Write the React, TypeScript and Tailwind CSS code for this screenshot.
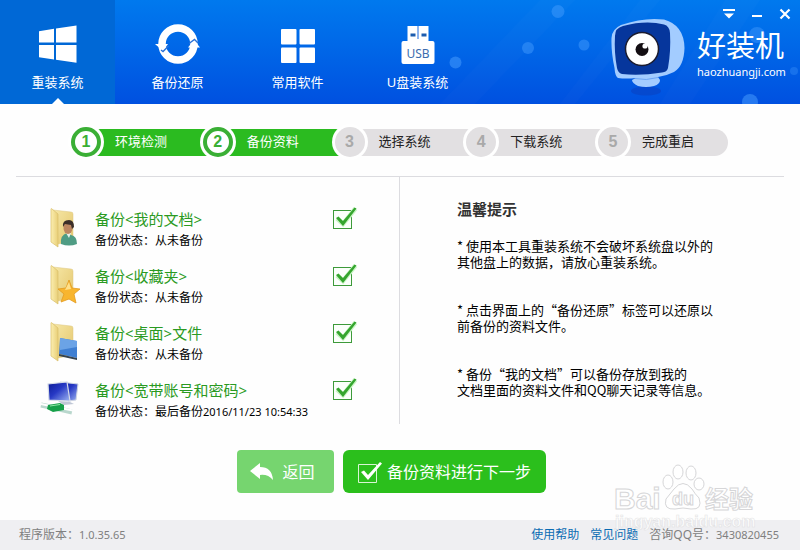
import React, { useState } from "react";

type Backup = {
    id: string;
    title: string;
    status: string;
    date?: string;
    icon: React.ReactNode;
};

const steps = ["环境检测", "备份资料", "选择系统", "下载系统", "完成重启"];
const currentStep = 2;

function WindowsIcon() {
    return (
        <svg width="40" height="40" viewBox="0 0 40 40" fill="#fff">
            <path d="M1 7.200 16 4.800V18.600H1zM18 4.500 38.500 1.500V18.600H18zM1 21H16V35.500L1 33.200zM18 21H38.500V38.800L18 35.800z" />
        </svg>
    );
}

function RestoreIcon() {
    return (
        <svg width="46" height="40" viewBox="0 0 46 40" fill="none">
            <circle cx="23" cy="20" r="16" stroke="#fff" strokeWidth="7.500" />
            <path d="M0 20H13L8 27z" fill="#fff" />
            <path d="M33 23.500H45L39 16z" fill="#fff" />
            <path d="M6 26 8 27.500 13.500 22M34 19.500 39.500 15.500 43 19" stroke="#2a72d8" strokeWidth="1.400" />
        </svg>
    );
}

function AppsIcon() {
    return (
        <svg width="34" height="40" viewBox="0 0 34 40" fill="#fff">
            <rect x="0" y="5" width="15.500" height="15.500" rx="1" />
            <rect x="18.500" y="5" width="15.500" height="15.500" rx="1" />
            <rect x="0" y="23.500" width="15.500" height="15.500" rx="1" />
            <rect x="18.500" y="23.500" width="15.500" height="15.500" rx="1" />
        </svg>
    );
}

function UsbIcon() {
    return (
        <svg width="34" height="40" viewBox="0 0 34 40">
            <path d="M6.500 2H27.500V17H6.500z" fill="#fff" />
            <path d="M17 2V15" stroke="#1d6be0" />
            <path d="M9.500 9.500H14.500V12.500H9.500zM20.500 9.500H25.500V12.500H20.500z" fill="#1c5cae" />
            <rect x="0.500" y="17" width="33" height="23" rx="2" fill="#fff" />
            <text x="17" y="33.500" textAnchor="middle" fontSize="12" fill="#3a6cae" fontFamily="Noto Sans, sans-serif">USB</text>
        </svg>
    );
}

function Mascot() {
    return (
        <svg width="78" height="80" viewBox="0 0 78 80" className="mt-[18px]">
            <ellipse cx="36" cy="73" rx="15" ry="4.500" fill="#0a3fc0" opacity=".55" />
            <path d="M1.500 20Q2 11 11 7 34-1 54 1.500 74 7 74.500 30 74 48 64 54 56 58 48 59L50 62Q50 66 44 68 36 70 28 68 22 65 22 62L26 60Q16 61 8 60 5 58 4.500 50 1 34 1.500 20z" fill="#a3ccff" />
            <path d="M5 18Q5 10 13 8 36 2 54 6.500 59.500 8 60 15 61 33 58 50 57 54 52 54.500 30 58 12 56 8 55 7 50 4 34 5 18z" fill="#06369c" />
            <circle cx="32" cy="31" r="16.500" fill="#fff" stroke="#1b1c30" strokeWidth="1.500" />
            <circle cx="32" cy="31.500" r="6.500" fill="#130d12" />
            <circle cx="35" cy="28" r="2.600" fill="#fff" />
            <path d="M25 60.500Q36 63 48 59.500" stroke="#6ea6f5" fill="none" />
        </svg>
    );
}

function HeaderBackdrop() {
    return (
        <svg className="pointer-events-none absolute right-0 top-0" width="380" height="104" viewBox="420 0 380 104">
            <path d="M540 0 440 104H475L575 0zM640 0 560 104H575L660 0zM725 0 660 104H690L760 0z" fill="#fff" opacity=".015" />
            <g fill="#4aa0ff">
                <circle cx="455.500" cy="62.500" r="6" opacity=".5" />
                <circle cx="528" cy="48" r="6" opacity=".45" />
                <circle cx="558" cy="11.500" r="6.500" opacity=".45" />
                <circle cx="584" cy="45" r="5.500" opacity=".45" />
                <circle cx="757" cy="35" r="8" opacity=".4" />
                <circle cx="750" cy="102" r="8" opacity=".5" />
                <circle cx="794" cy="71" r="4" opacity=".3" />
            </g>
        </svg>
    );
}

function FolderIcon({ children }: { children?: React.ReactNode }) {
    return (
        <svg width="44" height="42" viewBox="0 0 44 42">
            <defs>
                <linearGradient id="folderFront" x1="0" x2="1">
                    <stop offset="0" stopColor="#fbeeb0" />
                    <stop offset="1" stopColor="#e9cf78" />
                </linearGradient>
                <linearGradient id="folderBack" x1="0" x2="1" y2="1">
                    <stop offset="0" stopColor="#f6e7a6" />
                    <stop offset="1" stopColor="#e4c66c" />
                </linearGradient>
            </defs>
            <path d="M13 3 31 5Q33 5 33 7V34L18 37z" fill="url(#folderBack)" stroke="#dcc682" strokeWidth=".5" />
            <path d="M11 2Q11 1 12 2L18 7V40L11 35z" fill="url(#folderFront)" stroke="#d9bf6c" strokeWidth=".7" />
            {children}
        </svg>
    );
}

function NetworkIcon() {
    return (
        <svg width="44" height="42" viewBox="0 0 44 42">
            <defs>
                <linearGradient id="screen" x1="0" x2="1" y2="1">
                    <stop offset="0" stopColor="#0b1b95" />
                    <stop offset=".45" stopColor="#2638c4" />
                    <stop offset="1" stopColor="#9fb6f2" />
                </linearGradient>
            </defs>
            <path d="M20 4 38 6 36 22 28 23z" fill="url(#screen)" stroke="#ccd3e2" />
            <path d="M8 6 27 4 30 23 9 22z" fill="url(#screen)" stroke="#d5dbe8" strokeWidth="1.200" />
            <path d="M18 23 30 24 34 26 24 27z" fill="#bfc7d6" />
            <path d="M1 27 15 30 32 34" stroke="#b9d7cd" strokeWidth="5" fill="none" />
            <path d="M1 26 15 29 33 32.500" stroke="#fff" strokeWidth="2" fill="none" />
            <path d="M8 27 20 25 24 27V32L13 34 7 31z" fill="#17a04a" />
            <path d="M10 28 20 26.500" stroke="#8ee6a6" />
        </svg>
    );
}

const backups: Backup[] = [
    {
        id: "docs",
        title: "备份<我的文档>",
        status: "从未备份",
        icon: (
            <FolderIcon>
                <path d="M21 37Q20 28 27 26L31 28Q37 29 37 37Q29 40 21 37z" fill="#4f9c84" />
                <path d="M26 26 29 31 31 26z" fill="#e6f0ea" />
                <ellipse cx="28" cy="21" rx="4.500" ry="6" fill="#bd8660" />
                <path d="M23 20Q22 13 29 13 34 13 34 20L32 22 31 18 25 17z" fill="#3c2e28" />
            </FolderIcon>
        ),
    },
    {
        id: "favorites",
        title: "备份<收藏夹>",
        status: "从未备份",
        icon: (
            <FolderIcon>
                <path d="M29 16 32 24 40 25 34 30 36 39 29 35 21 38 24 30 18 25 26 24z" fill="#f8b52e" stroke="#e39a1e" strokeWidth=".8" />
                <path d="M29 18 31 25 25 26z" fill="#ffe08a" />
            </FolderIcon>
        ),
    },
    {
        id: "desktop",
        title: "备份<桌面>文件",
        status: "从未备份",
        icon: (
            <FolderIcon>
                <path d="M20 17 37 20V37L19 33z" fill="#3f7fd2" />
                <path d="M20 17 37 20V26L20 29z" fill="#6ba3e6" />
                <path d="M19 33 37 37V39L19 35z" fill="#35434f" />
            </FolderIcon>
        ),
    },
    {
        id: "accounts",
        title: "备份<宽带账号和密码>",
        status: "最后备份",
        date: "2016/11/23 10:54:33",
        icon: <NetworkIcon />,
    },
];

const tabs = [
    { label: "重装系统", icon: <WindowsIcon /> },
    { label: "备份还原", icon: <RestoreIcon /> },
    { label: "常用软件", icon: <AppsIcon /> },
    { label: "U盘装系统", icon: <UsbIcon /> },
];

function Header() {
    return (
        <header className="relative flex h-[104px] justify-between bg-linear-to-b from-[#0079ee] to-[#0050e0] text-white">
            <HeaderBackdrop />
            <nav className="flex gap-[5px]">
                {tabs.map((tab, i) => (
                    <button
                        key={tab.label}
                        className={`relative flex w-[115px] flex-col items-center gap-2 pt-6 text-[13px] leading-5 ${
                            i === 0 ? "bg-[#0068d6]" : ""
                        }`}
                    >
                        {tab.icon}
                        {tab.label}
                        {i === 0 && (
                            <svg className="absolute bottom-0" width="12" height="6" viewBox="0 0 12 6">
                                <path d="M0 6 6 0 12 6z" fill="#fff" />
                            </svg>
                        )}
                    </button>
                ))}
            </nav>

            <div className="relative flex gap-[9px]">
                <Mascot />
                <div className="w-[103px]">
                    <div className="flex justify-end gap-4 pr-[9px] pt-2">
                        <button aria-label="菜单">
                            <svg width="12" height="12" viewBox="0 0 12 12" fill="#fff">
                                <path d="M0 1H12V3H0zM1 5.500H11L6 10.500z" />
                            </svg>
                        </button>
                        <button aria-label="最小化">
                            <svg width="12" height="12" viewBox="0 0 12 12" fill="#fff">
                                <path d="M1 7H11V9H1z" />
                            </svg>
                        </button>
                        <button aria-label="关闭">
                            <svg width="12" height="12" viewBox="0 0 12 12" stroke="#fff" strokeWidth="2.200">
                                <path d="M1.500 1.500 10.500 10.500M10.500 1.500 1.500 10.500" />
                            </svg>
                        </button>
                    </div>
                    <div className="mt-2 text-[29px] leading-9">好装机</div>
                    <div className="text-[11px] leading-4">haozhuangji.com</div>
                </div>
            </div>
        </header>
    );
}

function Steps() {
    return (
        <ol className="ml-[86px] mr-[72px] mt-5 flex h-9 items-center text-[13px]">
            {steps.map((step, i) => {
                const done = i < currentStep;
                const last = i === steps.length - 1;
                return (
                    <li
                        key={step}
                        className={`flex h-[27px] items-center gap-[11px] ${
                            done ? "bg-[#2bbb20] text-white" : "bg-[#e2e0e2] text-[#222]"
                        } ${last ? "w-[115px] rounded-r-full" : "flex-1"}`}
                    >
                        <span className="-ml-[18px] flex size-9 items-center justify-center rounded-full bg-white">
                            <span
                                className={`flex size-[30px] items-center justify-center rounded-full font-['Liberation_Sans',sans-serif] text-base font-bold ${
                                    done ? "border-4 border-[#3aaf35] bg-white text-[#3aaf35]" : "bg-[#e2e0e2] text-[#a9a9a9]"
                                }`}
                            >
                                {i + 1}
                            </span>
                        </span>
                        {step}
                    </li>
                );
            })}
        </ol>
    );
}

function BackupRow({ item }: { item: Backup }) {
    const [checked, setChecked] = useState(true);

    return (
        <li className="flex items-start">
            {item.icon}
            <label htmlFor={item.id} className="ml-[11px] flex-1">
                <span className="block text-[15px] leading-6 text-[#2a9a22]">{item.title}</span>
                <span className="block text-[12px] leading-5 text-black">
                    备份状态：{item.status}
                    {item.date && <span className="text-[11px]">{item.date}</span>}
                </span>
            </label>
            <span className="relative mt-[3px] flex">
                <input
                    id={item.id}
                    type="checkbox"
                    checked={checked}
                    onChange={(e) => setChecked(e.target.checked)}
                    className="size-[19px] appearance-none border border-[#3d9a3a] bg-[#fbfffb]"
                />
                {checked && (
                    <svg className="pointer-events-none absolute -top-1 left-0" width="26" height="23" viewBox="0 -4 26 23">
                        <path d="M4 8.500 10 14 22.500-1.500" fill="none" stroke="#c9f5c4" strokeWidth="4.500" />
                        <path d="M3 8 5.500 6.500 10 11 21.500-2.500 23.500-1.500 10 16z" fill="#35a52e" />
                    </svg>
                )}
            </span>
        </li>
    );
}

function Tips() {
    return (
        <section className="flex-1 pl-[57px] pt-5 font-['Noto_Sans_CJK_SC',sans-serif]">
            <h2 className="text-[15px] font-bold leading-6 text-[#333]">温馨提示</h2>
            <div className="mt-[17px] flex flex-col gap-8 text-[13px] leading-4 text-black">
                <p>
                    * 使用本工具重装系统不会破坏系统盘以外的
                    <br />
                    其他盘上的数据，请放心重装系统。
                </p>
                <p>
                    * 点击界面上的“备份还原”标签可以还原以
                    <br />
                    前备份的资料文件。
                </p>
                <p>
                    * 备份“我的文档”可以备份存放到我的
                    <br />
                    文档里面的资料文件和QQ聊天记录等信息。
                </p>
            </div>
        </section>
    );
}

function Watermark() {
    return (
        <svg className="pointer-events-none absolute bottom-4 right-10" width="150" height="74" viewBox="0 0 150 74">
            <g fill="#fff" stroke="#d6d6d8" strokeWidth="1" fontFamily="Liberation Sans, Noto Sans CJK SC, sans-serif" fontWeight="700">
                <text x="4" y="49" fontSize="30">Bai</text>
                <ellipse cx="58" cy="22" rx="5" ry="7" />
                <ellipse cx="68" cy="12" rx="5" ry="7" />
                <ellipse cx="81" cy="13" rx="5" ry="7" />
                <ellipse cx="89" cy="24" rx="5" ry="6" />
                <path d="M64 29Q73 18 82 29 85 34 89 38 93 50 81 49 73 47 65 49 53 50 56 39 60 34 64 29z" />
                <text x="62" y="45" fontSize="18">du</text>
                <text x="95" y="48" fontSize="24">经验</text>
            </g>
            <text x="5" y="67" fontSize="16" fontWeight="700" fontFamily="Liberation Sans, sans-serif" fill="#fff" stroke="#dedee0" strokeWidth=".6" opacity=".8">jingyan.baidu.com</text>
        </svg>
    );
}

export default function App() {
    return (
        <div lang="zh-CN" className="relative flex min-h-screen flex-col bg-[#fefefe] font-['Noto_Sans','Noto_Sans_CJK_SC',sans-serif]">
            <Header />
            <Steps />

            <main className="mx-4 mt-4 flex border-t border-[#dcdce0]">
                <ul className="flex w-1/2 flex-col gap-[13px] border-r border-[#dcdce0] pb-0.5 pl-6 pr-[47px] pt-[30px]">
                    {backups.map((item) => (
                        <BackupRow key={item.id} item={item} />
                    ))}
                </ul>
                <Tips />
            </main>

            <div className="mb-[27px] mt-[26px] flex justify-center gap-[9px] pr-[17px] text-base text-white">
                <button className="flex h-[43px] w-[97px] items-center justify-center gap-2 rounded bg-[#76d56f] pr-1.5">
                    <svg width="24" height="18" viewBox="0 0 24 18" fill="#fff">
                        <path d="M0 8 10 0V4Q22 4 23 17 18 11 10 12V16z" />
                    </svg>
                    返回
                </button>
                <button className="flex h-[43px] w-[203px] items-center justify-center gap-1 rounded-md bg-[#2bbf1c]">
                    <svg width="25" height="24" viewBox="0 0 25 24">
                        <path d="M.5 4.500H18.500V22.500H.5z" fill="none" stroke="#d9f5d5" />
                        <path d="M3 12 6 10.500 10 15 22 2 24 3.500 10 20z" fill="#fff" />
                    </svg>
                    备份资料进行下一步
                </button>
            </div>

            <footer className="mt-auto flex h-[30px] items-center gap-[11px] bg-[#efeff2] pl-[19px] pr-[21px] text-[12px] text-[#808080]">
                <span className="mr-auto">
                    程序版本：<span className="text-[11px]">1.0.35.65</span>
                </span>
                <a href="#help" className="text-[#0b6cb3]">使用帮助</a>
                <a href="#faq" className="text-[#0b6cb3]">常见问题</a>
                <span>
                    咨询QQ号：<span className="text-[11px]">3430820455</span>
                </span>
            </footer>
            <Watermark />
        </div>
    );
}
